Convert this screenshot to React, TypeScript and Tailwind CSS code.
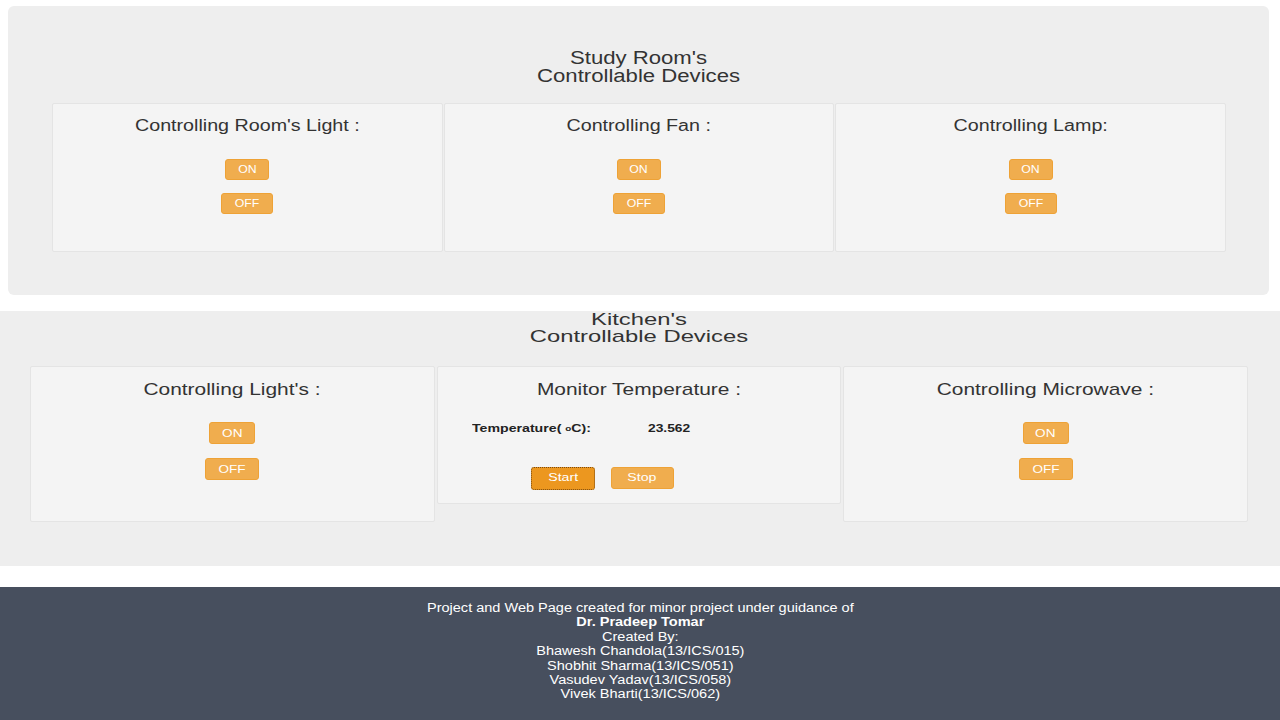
import React from "react";

// The captured page is stretched sideways a little, so text gets a scale-x.
const WIDE = "inline-block scale-x-[1.23]";

function Btn({ label, className = "" }: { label: string; className?: string }) {
  return (
    <button
      className={
        "bg-[#f0ad4e] border border-[#eea236] text-white rounded-[3px] leading-none flex items-center justify-center " +
        className
      }
    >
      <span className={WIDE}>{label}</span>
    </button>
  );
}

function SwitchCard({ title, kitchen }: { title: string; kitchen?: boolean }) {
  if (kitchen) {
    return (
      <div className="bg-[#f4f4f4] border border-[#e4e4e4] rounded-[2px] h-[156px] flex flex-col items-center pt-[14px]">
        <h3 className="text-[17px] leading-[18px] text-[#333]">
          <span className={WIDE}>{title}</span>
        </h3>
        <Btn label="ON" className="mt-[23px] w-[46px] h-[22px] text-[11px]" />
        <Btn label="OFF" className="mt-[14px] w-[54px] h-[22px] text-[11px]" />
      </div>
    );
  }
  return (
    <div className="bg-[#f4f4f4] border border-[#e4e4e4] rounded-[2px] h-[149px] flex flex-col items-center pt-[13px]">
      <h3 className="text-[16px] leading-[18px] text-[#333]">
        <span className={WIDE}>{title}</span>
      </h3>
      <Btn label="ON" className="mt-[24px] w-[44px] h-[21px] text-[10px]" />
      <Btn label="OFF" className="mt-[13px] w-[52px] h-[21px] text-[10px]" />
    </div>
  );
}

export default function App() {
  return (
    <div className="bg-white w-[1280px] h-[720px] overflow-hidden font-['Liberation_Sans',Arial,sans-serif] text-[#333]">
      {/* Study room */}
      <div className="mx-[8px] mt-[6px] w-[1261px] h-[289px] bg-[#eeeeee] rounded-[6px] pt-[43px] px-[44px]">
        <h2 className="text-center text-[18px] leading-[18px]">
          <span className={WIDE}>
            Study Room's
            <br />
            Controllable Devices
          </span>
        </h2>
        <div className="mt-[18px] grid grid-cols-3 gap-[1px] w-[1174px]">
          <SwitchCard title="Controlling Room's Light :" />
          <SwitchCard title="Controlling Fan :" />
          <SwitchCard title="Controlling Lamp:" />
        </div>
      </div>

      {/* Kitchen */}
      <div className="mt-[16px] h-[255px] bg-[#eeeeee] pl-[30px] pr-[32px]">
        <h2 className="text-center text-[17px] leading-[17px]">
          <span className="inline-block scale-x-[1.4]">
            Kitchen's
            <br />
            Controllable Devices
          </span>
        </h2>
        <div className="mt-[21px] grid grid-cols-3 gap-[2px] items-start">
          <SwitchCard title="Controlling Light's :" kitchen />
          <div className="bg-[#f4f4f4] border border-[#e4e4e4] rounded-[2px] h-[138px] flex flex-col pt-[14px]">
            <h3 className="text-center text-[17px] leading-[18px]">
              <span className={WIDE}>Monitor Temperature :</span>
            </h3>
            <div className="mt-[24px] flex items-center text-[11.5px] font-bold leading-none text-[#222]">
              <span className="ml-[34px] w-[176px]">
                <span className="inline-block origin-left scale-x-[1.23]">
                  Temperature( <sup className="text-[8px] relative top-[-1px]">o</sup>C):
                </span>
              </span>
              <span className="inline-block origin-left scale-x-[1.2]">23.562</span>
            </div>
            <div className="mt-[32px] flex items-center ml-[93px] gap-[16px]">
              <button className="w-[64px] h-[23px] bg-[#ec971f] border border-dotted border-[#7a4a10] rounded-[3px] text-white text-[11.5px] leading-none">
                <span className={WIDE}>Start</span>
              </button>
              <Btn label="Stop" className="w-[63px] h-[22px] text-[11.5px]" />
            </div>
          </div>
          <SwitchCard title="Controlling Microwave :" kitchen />
        </div>
      </div>

      {/* Footer */}
      <footer className="mt-[21px] h-[133px] bg-[#474f5e] text-white text-center text-[12px] leading-[14.4px] pt-[14px]">
        <div className="inline-block scale-x-[1.21]">
          <p>Project and Web Page created for minor project under guidance of</p>
          <p className="font-bold">Dr. Pradeep Tomar</p>
          <p>Created By:</p>
          <p>Bhawesh Chandola(13/ICS/015)</p>
          <p>Shobhit Sharma(13/ICS/051)</p>
          <p>Vasudev Yadav(13/ICS/058)</p>
          <p>Vivek Bharti(13/ICS/062)</p>
        </div>
      </footer>
    </div>
  );
}
